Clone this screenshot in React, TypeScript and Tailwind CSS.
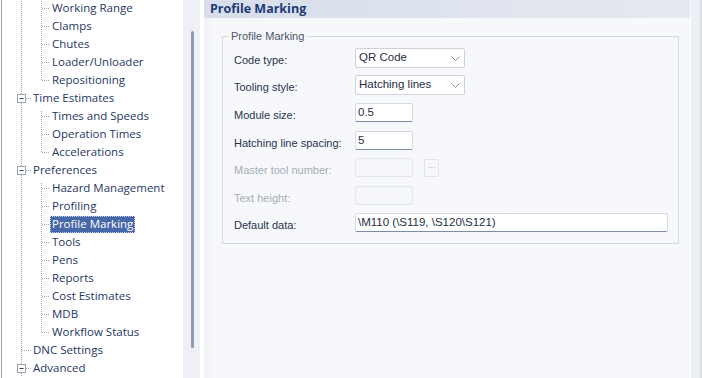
import React from 'react';

type TreeRow = {
  label: string;
  level: 1 | 2;
  first?: boolean;
  last?: boolean;
  leaf?: boolean;
  selected?: boolean;
};

const rows: TreeRow[] = [
  { label: 'Working Range', level: 2 },
  { label: 'Clamps', level: 2 },
  { label: 'Chutes', level: 2 },
  { label: 'Loader/Unloader', level: 2 },
  { label: 'Repositioning', level: 2, last: true },
  { label: 'Time Estimates', level: 1 },
  { label: 'Times and Speeds', level: 2, first: true },
  { label: 'Operation Times', level: 2 },
  { label: 'Accelerations', level: 2, last: true },
  { label: 'Preferences', level: 1 },
  { label: 'Hazard Management', level: 2, first: true },
  { label: 'Profiling', level: 2 },
  { label: 'Profile Marking', level: 2, selected: true },
  { label: 'Tools', level: 2 },
  { label: 'Pens', level: 2 },
  { label: 'Reports', level: 2 },
  { label: 'Cost Estimates', level: 2 },
  { label: 'MDB', level: 2 },
  { label: 'Workflow Status', level: 2, last: true },
  { label: 'DNC Settings', level: 1, leaf: true },
  { label: 'Advanced', level: 1 },
];

const dot = { stroke: '#a2a7b0', strokeWidth: 1, strokeDasharray: '1 1' };

const Connector = ({ row }: { row: TreeRow }) => {
  if (row.level === 2) {
    return (
      <svg width="50" height="18" className="shrink-0">
        <line x1="19.5" y1="0" x2="19.5" y2="18" {...dot} />
        <line x1="39.5" y1={row.first ? 4 : 0} x2="39.5" y2={row.last ? 10 : 18} {...dot} />
        <line x1="40" y1="9.5" x2="48" y2="9.5" {...dot} />
      </svg>
    );
  }
  if (row.leaf) {
    return (
      <svg width="31" height="18" className="shrink-0">
        <line x1="19.5" y1="0" x2="19.5" y2="18" {...dot} />
        <line x1="20" y1="9.5" x2="30" y2="9.5" {...dot} />
      </svg>
    );
  }
  return (
    <svg width="31" height="18" className="shrink-0">
      <line x1="19.5" y1="0" x2="19.5" y2="5" {...dot} />
      <line x1="19.5" y1="14" x2="19.5" y2="18" {...dot} />
      <rect x="15.5" y="5.5" width="8" height="8" fill="#fff" stroke="#9ba3b3" />
      <line x1="17.5" y1="9.5" x2="21.5" y2="9.5" stroke="#3a4256" />
      <line x1="24" y1="9.5" x2="30" y2="9.5" {...dot} />
    </svg>
  );
};

const Chevron = () => (
  <svg width="9" height="5" viewBox="0 0 9 5" className="shrink-0">
    <polyline points="0.5,0.5 4.5,4.5 8.5,0.5" fill="none" stroke="#8d94a2" strokeWidth="1" />
  </svg>
);

const Combo = ({ value }: { value: string }) => (
  <div className="flex h-[20px] w-[110px] items-center justify-between rounded-[2px] border border-[#cdd2da] bg-white pl-[3px] pr-[4px] text-[11.5px] text-[#1f2d44]">
    <span>{value}</span>
    <Chevron />
  </div>
);

const Field = ({ value, width, disabled }: { value?: string; width: string; disabled?: boolean }) => (
  <div
    className={`flex h-[19px] items-center rounded-[2px] border pl-[2px] text-[11.5px] text-[#1f2d44] ${width} ${
      disabled ? 'border-[#e3e6eb] bg-[#f6f7fa]' : 'border-[#d6dae1] border-b-[#7f8ca8] bg-white'
    }`}
  >
    {value}
  </div>
);

const Label = ({ text, disabled }: { text: string; disabled?: boolean }) => (
  <div className={`mt-[5px] w-[121px] shrink-0 text-[11px] leading-[13px] ${disabled ? 'text-[#a6acb6]' : 'text-[#26354c]'}`}>
    {text}
  </div>
);

export default function App() {
  return (
    <div className="flex h-[378px] w-[702px] overflow-hidden bg-white font-['Liberation_Sans',Arial,sans-serif]">
      {/* tree */}
      <div className="ml-px w-[182px] shrink-0 border-l border-[#9ea6b6] bg-white font-['Open_Sans',sans-serif] text-[11.5px] text-[#1f3765]">
        <div className="-mt-[1px]">
          {rows.map((row) => (
            <div key={row.label} className="flex h-[18px] items-center">
              <Connector row={row} />
              {row.selected ? (
                <span className="-ml-[2px] flex h-[17px] items-center bg-[#4768a8] px-[2px] text-white outline-1 outline-dotted outline-[#c5d0e8] -outline-offset-1">
                  {row.label}
                </span>
              ) : (
                <span className="whitespace-nowrap">{row.label}</span>
              )}
            </div>
          ))}
        </div>
      </div>

      {/* scrollbar */}
      <div className="w-[17px] shrink-0 bg-[#eef0f5] pl-[8px] pt-[31px]">
        <div className="h-[317px] w-[3px] rounded-full bg-[#8e9ab6]" />
      </div>
      <div className="w-[4px] shrink-0 bg-white" />

      {/* page */}
      <div className="flex flex-1 flex-col">
        <div className="h-[18px] shrink-0 bg-linear-to-r from-[#d7deea] to-[#e5e9f1] pl-[6px] font-['Open_Sans',sans-serif] text-[12.5px] font-bold leading-[17px] text-[#1e3a77]">
          Profile Marking
        </div>
        <div className="flex-1 bg-linear-to-r from-[#eef1f5] from-[0px] to-[#f7f8fb] to-[8px] pl-[18px] pr-[11px] pt-[12px]">
          <fieldset className="border border-[#d3d8e1] pb-[11px]">
            <legend className="ml-[6px] px-[2px] text-[11px] leading-[13px] text-[#4a5568]">Profile Marking</legend>
            <div className="flex flex-col pl-[11px] pt-[5px]">
              <div className="flex items-center">
                <Label text="Code type:" />
                <Combo value="QR Code" />
              </div>
              <div className="mt-[7px] flex items-center">
                <Label text="Tooling style:" />
                <Combo value="Hatching lines" />
              </div>
              <div className="mt-[8px] flex items-center">
                <Label text="Module size:" />
                <Field value="0.5" width="w-[58px]" />
              </div>
              <div className="mt-[9px] flex items-center">
                <Label text="Hatching line spacing:" />
                <Field value="5" width="w-[58px]" />
              </div>
              <div className="mt-[8px] flex items-center">
                <Label text="Master tool number:" disabled />
                <Field width="w-[58px]" disabled />
                <div className="ml-[11px] flex h-[18px] w-[15px] items-center justify-center rounded-[2px] border border-[#e0e3e8] bg-[#f7f8fb] pb-[3px] text-[9px] text-[#aab0ba]">
                  ...
                </div>
              </div>
              <div className="mt-[9px] flex items-center">
                <Label text="Text height:" disabled />
                <Field width="w-[58px]" disabled />
              </div>
              <div className="mt-[8px] flex items-center">
                <Label text="Default data:" />
                <Field value="\M110 (\S119, \S120\S121)" width="w-[313px]" />
              </div>
            </div>
          </fieldset>
        </div>
      </div>

      {/* right edge */}
      <div className="w-[12px] shrink-0 border-l border-r-2 border-l-[#fbfcfd] border-r-[#d8dce3] bg-[#eceff4]" />
    </div>
  );
}
